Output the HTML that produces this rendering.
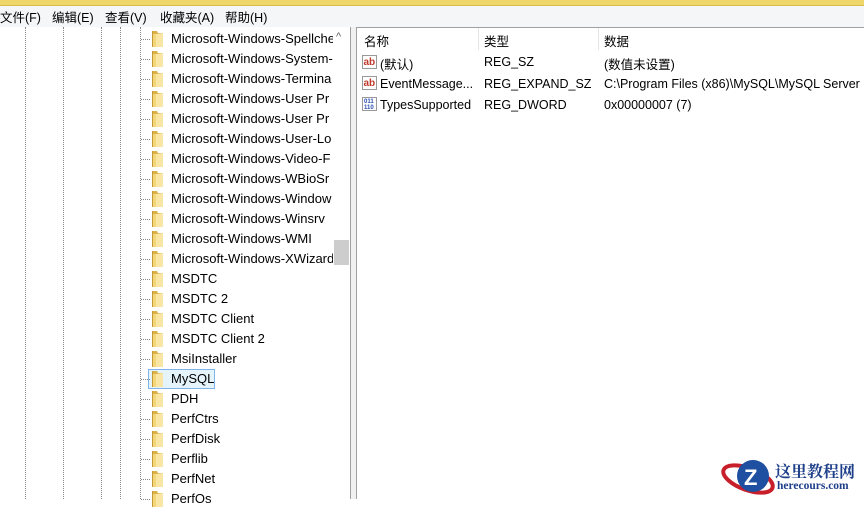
<!DOCTYPE html>
<html><head><meta charset="utf-8"><style>
*{margin:0;padding:0;box-sizing:border-box}
body{width:864px;height:499px;overflow:hidden;background:#fff;position:relative;font-family:"Liberation Sans","Noto Sans CJK SC",sans-serif;font-size:12.5px;color:#000}
.title{position:absolute;left:0;top:0;width:864px;height:6px;background:#efd66a;border-bottom:1px solid #d9be4e}
.menu{position:absolute;left:0;top:6px;width:864px;height:21px;background:#f5f6f7}
.menu span{position:absolute;top:1px;font-size:12.5px}
.left{position:absolute;left:0;top:27px;width:351px;height:472px;background:#fff;border-right:1px solid #a0a0a0}
.gap{position:absolute;left:351px;top:27px;width:5px;height:472px;background:#f0f0f0}
.right{position:absolute;left:356px;top:27px;width:508px;height:472px;background:#fff;border-left:1px solid #a0a0a0;border-top:1px solid #a0a0a0}
.vl{position:absolute;top:27px;height:472px;width:0;border-left:1px dotted #888}
.row{position:absolute;left:141px;height:20px;width:192px;white-space:nowrap;overflow:hidden}
.row .h{position:absolute;left:0;top:10px;width:9px;border-top:1px dotted #888}
.row .t{position:absolute;left:30px;top:2px;font-size:13px}
.sb{position:absolute;left:333px;top:28px;width:17px;height:471px;background:#fff}
.thumb{position:absolute;left:334px;top:240px;width:15px;height:25px;background:#cdcdcd}
.hd{position:absolute;top:31px;font-size:12.5px}
.cell{position:absolute;font-size:12.5px;white-space:nowrap}
.sel{position:absolute;left:148px;top:369px;width:67px;height:20px;border:1px solid #7eb4ea;background:#e5f3fb}
</style></head><body>
<div class="title"></div>
<div class="menu">
<span style="left:0">文件(F)</span><span style="left:52px">编辑(E)</span><span style="left:105px">查看(V)</span><span style="left:160px">收藏夹(A)</span><span style="left:225px">帮助(H)</span>
</div>
<div class="left"></div>
<div class="vl" style="left:25px"></div>
<div class="vl" style="left:63px"></div>
<div class="vl" style="left:101px"></div>
<div class="vl" style="left:120px"></div>
<div class="vl" style="left:140px"></div>
<div class="sel"></div>
<div id="tree"></div>
<div class="sb"></div>
<div style="position:absolute;left:336px;top:31px;font-size:11px;color:#606060">&#94;</div>
<div class="thumb"></div>
<div class="gap"></div>
<div class="right"></div>
<div style="position:absolute;left:478px;top:28px;height:22px;border-left:1px solid #e5e5e5"></div>
<div style="position:absolute;left:598px;top:28px;height:22px;border-left:1px solid #e5e5e5"></div>
<div class="hd" style="left:364px">名称</div>
<div class="hd" style="left:484px">类型</div>
<div class="hd" style="left:604px">数据</div>

<svg style="position:absolute;left:362px;top:55px" width="16" height="60">
<g font-family="Liberation Sans" font-weight="bold" font-size="10" fill="#c0392b">
<rect x="0.5" y="0.5" width="14" height="13" fill="#fff" stroke="#999"/><text x="1.5" y="10">ab</text>
<rect x="0.5" y="21.5" width="14" height="13" fill="#fff" stroke="#999"/><text x="1.5" y="31">ab</text>
</g>
<rect x="0.5" y="42.5" width="14" height="13" fill="#fff" stroke="#999"/>
<text x="2" y="48" font-size="6" fill="#2a4fb0" font-family="Liberation Sans" font-weight="bold">011</text>
<text x="2" y="54" font-size="6" fill="#2a4fb0" font-family="Liberation Sans" font-weight="bold">110</text>
</svg>
<div class="cell" style="left:380px;top:54px">(默认)</div>
<div class="cell" style="left:484px;top:55px">REG_SZ</div>
<div class="cell" style="left:604px;top:54px">(数值未设置)</div>
<div class="cell" style="left:380px;top:77px">EventMessage...</div>
<div class="cell" style="left:484px;top:77px">REG_EXPAND_SZ</div>
<div class="cell" style="left:604px;top:77px">C:\Program Files (x86)\MySQL\MySQL Server</div>
<div class="cell" style="left:380px;top:98px">TypesSupported</div>
<div class="cell" style="left:484px;top:98px">REG_DWORD</div>
<div class="cell" style="left:604px;top:98px">0x00000007 (7)</div>

<svg style="position:absolute;left:716px;top:455px" width="60" height="44">
<ellipse cx="32" cy="24" rx="26" ry="11" fill="none" stroke="#c8202a" stroke-width="4" transform="rotate(20 32 24)"/>
<circle cx="37" cy="21" r="16" fill="#1e4fa0"/>
<text x="28" y="30" font-size="22" font-weight="bold" fill="#fff" font-family="Liberation Sans">Z</text>
</svg>
<div style="position:absolute;left:775px;top:459px;font-family:'Liberation Serif','Noto Serif CJK SC',serif;font-weight:bold;font-size:16px;color:#1e3f8a">这里教程网</div>
<div style="position:absolute;left:777px;top:480px;font-family:'Liberation Serif',serif;font-weight:bold;font-size:11.5px;color:#1e3f8a">herecours.com</div>

<script>
var names=["Microsoft-Windows-Spellche","Microsoft-Windows-System-","Microsoft-Windows-Termina","Microsoft-Windows-User Pr","Microsoft-Windows-User Pr","Microsoft-Windows-User-Lo","Microsoft-Windows-Video-F","Microsoft-Windows-WBioSr","Microsoft-Windows-Window","Microsoft-Windows-Winsrv","Microsoft-Windows-WMI","Microsoft-Windows-XWizard","MSDTC","MSDTC 2","MSDTC Client","MSDTC Client 2","MsiInstaller","MySQL","PDH","PerfCtrs","PerfDisk","Perflib","PerfNet","PerfOs"];
var h="";
names.forEach(function(n,i){
var y=29+i*20;
h+='<div class="row" style="top:'+y+'px"><div class="h"></div>'+
'<svg style="position:absolute;left:9px;top:1px" width="15" height="18"><path d="M2 1h5l1 2h5v14H2z" fill="#d9b24a"/><path d="M2 4h11v13H2z" fill="#f3d67a"/><path d="M6 4l7-1v14H6z" fill="#f9e6a4"/><path d="M2.5 1v16" stroke="#c49a34"/></svg>'+
'<div class="t">'+n+'</div></div>';
});
document.getElementById("tree").innerHTML=h;
</script>
</body></html>
